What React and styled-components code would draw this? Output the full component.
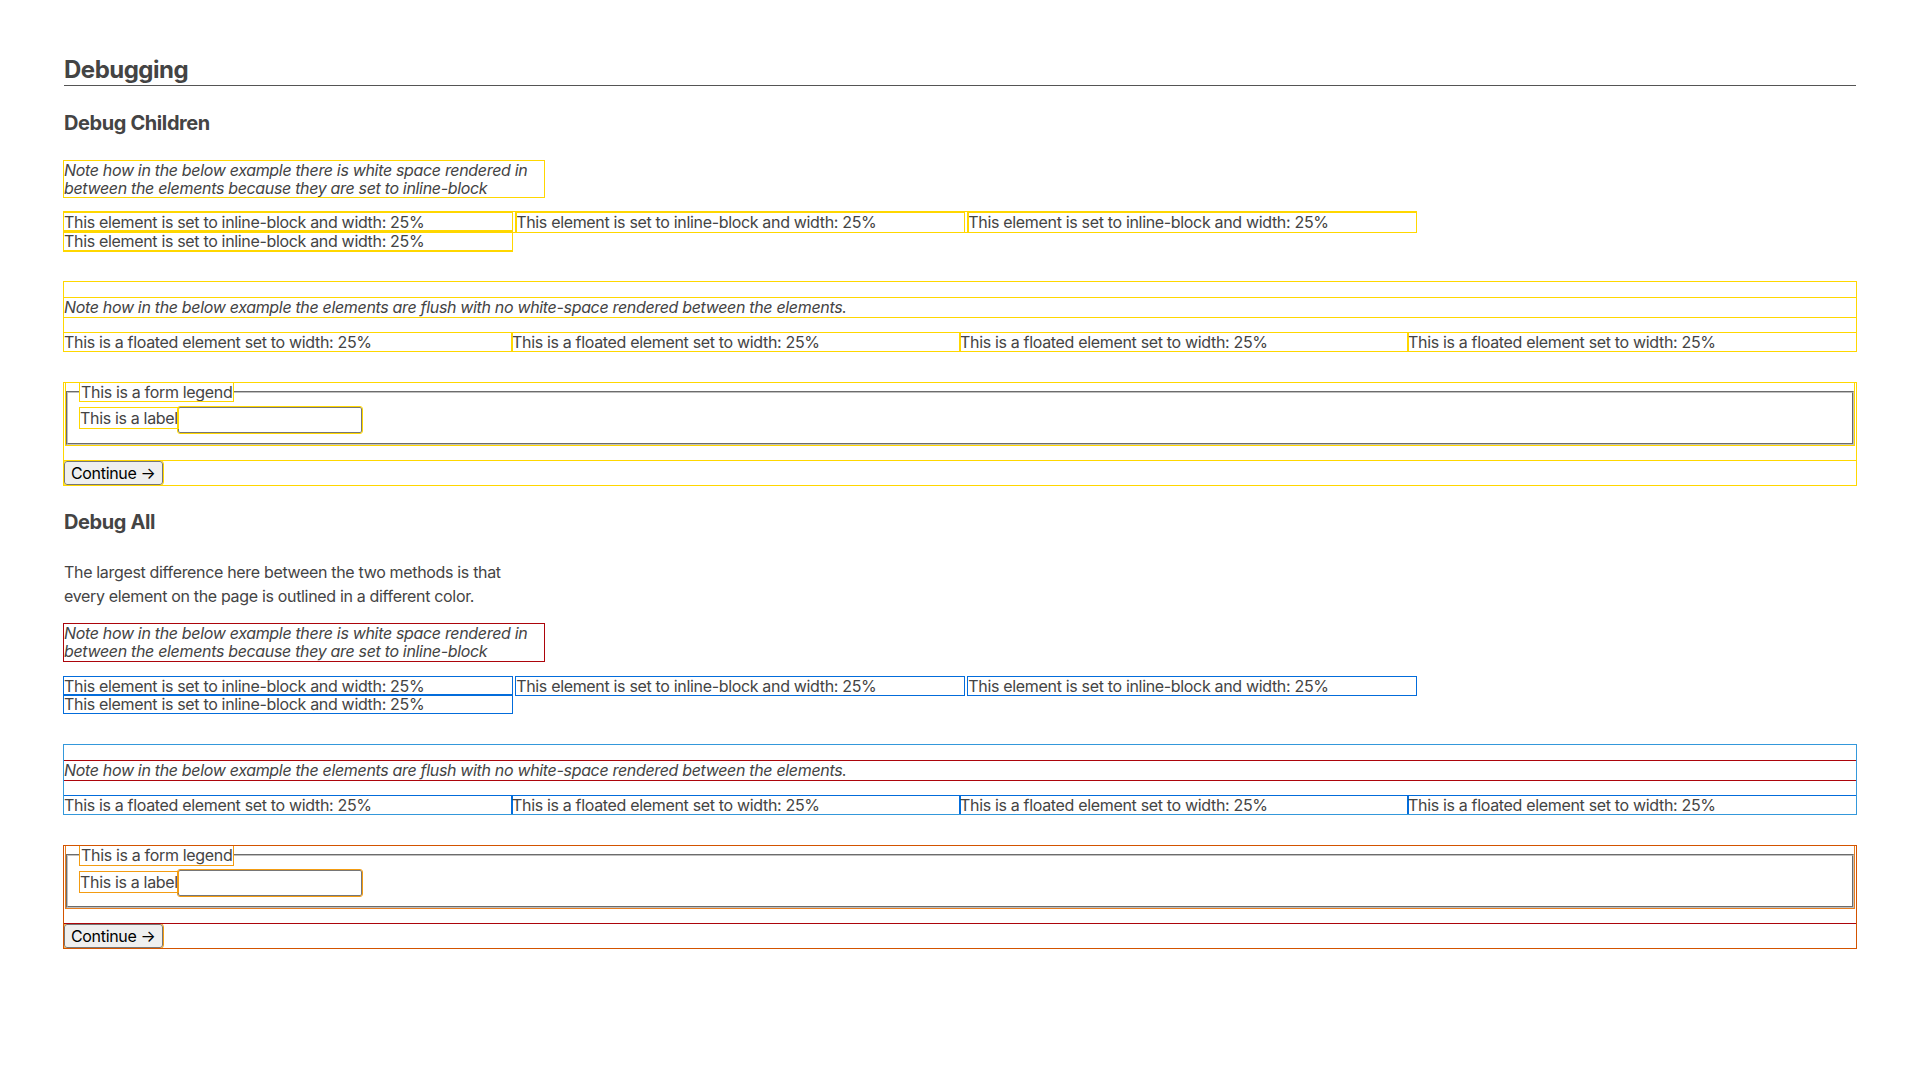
import styled, { createGlobalStyle, css } from "styled-components";

const GlobalStyle = createGlobalStyle`
  body {
    margin: 0;
    background: #fff;
    color: #444;
    font-family: Inter, "Liberation Sans", sans-serif;
    font-size: 16px;
    line-height: 1.15;
    letter-spacing: -0.33px;
  }
`;

const Page = styled.main`
  padding: 56px 64px 80px;
`;

const Title = styled.h1`
  margin: 0;
  padding-bottom: 1px;
  font-size: 24px;
  line-height: 1.15;
  font-weight: 700;
  letter-spacing: -0.5px;
  border-bottom: 1px solid #555;
`;

const SectionTitle = styled.h2`
  margin: 26px 0;
  font-size: 20px;
  line-height: 1.15;
  font-weight: 700;
  letter-spacing: -0.4px;
`;

const Lead = styled.p`
  max-width: 30em;
  margin: 16px 0;
  line-height: 1.5;
`;

const childrenOutline = css`
  & * {
    outline: 1px solid gold;
  }
`;

const allOutline = css`
  & p {
    outline: 1px solid #ac050b;
  }
  & div {
    outline: 1px solid #036cdb;
  }
  & article {
    outline: 1px solid #3498db;
  }
  & form {
    outline: 1px solid #d35400;
  }
  & fieldset {
    outline: 1px solid #e67e22;
  }
  & legend,
  & label,
  & input,
  & button {
    outline: 1px solid #f39c12;
  }
`;

const Debug = styled.div`
  ${({ $mode }) => ($mode === "all" ? allOutline : childrenOutline)}
`;

const Note = styled.p`
  max-width: ${({ $wide }) => ($wide ? "none" : "30em")};
  margin: 16px 0;
  font-style: italic;
`;

const InlineCell = styled.div`
  display: inline-block;
  width: 25%;
`;

const FloatRow = styled.article`
  margin-top: 32px;

  &::before,
  &::after {
    content: " ";
    display: table;
  }
  &::after {
    clear: both;
  }
`;

const FloatCell = styled.div`
  float: left;
  width: 25%;
`;

const Form = styled.form`
  margin-top: 32px;
`;

const Fieldset = styled.fieldset`
  margin: 0 2px;
  padding: 0.35em 0.75em 0.625em;
  border: 2px groove #c0c0c0;
`;

const Legend = styled.legend`
  padding: 0 1px;
`;

const Input = styled.input`
  box-sizing: border-box;
  width: 184px;
  height: 26px;
  margin: 0;
  padding: 1px 2px;
  border: 1px solid #767676;
  border-radius: 2px;
  font: inherit;
  vertical-align: middle;
`;

const ButtonRow = styled.p`
  margin: 16px 0;
`;

const Button = styled.button`
  box-sizing: border-box;
  height: 24px;
  margin: 0;
  padding: 1px 6px;
  border: 1px solid #767676;
  border-radius: 3px;
  background: #efefef;
  color: #000;
  font: inherit;
  line-height: 1.15;
  letter-spacing: inherit;
`;

const cells = [1, 2, 3, 4];

function DebugExample({ mode }) {
  return (
    <Debug $mode={mode}>
      <Note>
        Note how in the below example there is white space rendered in between
        the elements because they are set to inline-block
      </Note>
      {cells.map((n) => (
        <span key={n}>
          <InlineCell>This element is set to inline-block and width: 25%</InlineCell>{" "}
        </span>
      ))}
      <FloatRow>
        <Note $wide>
          Note how in the below example the elements are flush with no
          white-space rendered between the elements.
        </Note>
        {cells.map((n) => (
          <FloatCell key={n}>This is a floated element set to width: 25%</FloatCell>
        ))}
      </FloatRow>
      <Form onSubmit={(e) => e.preventDefault()}>
        <Fieldset>
          <Legend>This is a form legend</Legend>
          <label htmlFor={`field-${mode}`}>This is a label</label>
          <Input id={`field-${mode}`} type="text" />
        </Fieldset>
        <ButtonRow>
          <Button type="submit">Continue →</Button>
        </ButtonRow>
      </Form>
    </Debug>
  );
}

export default function App() {
  return (
    <>
      <GlobalStyle />
      <Page>
        <Title>Debugging</Title>
        <SectionTitle>Debug Children</SectionTitle>
        <DebugExample mode="children" />
        <SectionTitle>Debug All</SectionTitle>
        <Lead>
          The largest difference here between the two methods is that every
          element on the page is outlined in a different color.
        </Lead>
        <DebugExample mode="all" />
      </Page>
    </>
  );
}
